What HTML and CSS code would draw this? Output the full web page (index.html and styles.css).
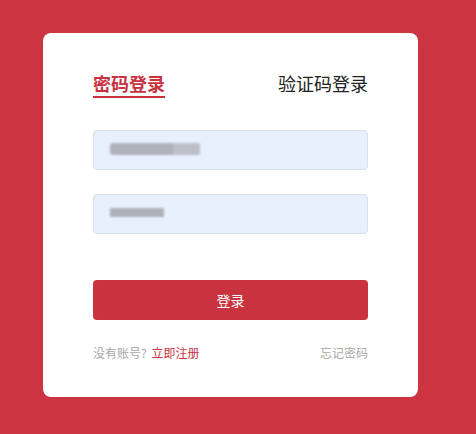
FILE: index.html
```html
<!DOCTYPE html>
<html>
<head>
<title>登录</title>
<link rel="stylesheet" href="styles.css">
</head>
<body>

<div class="login-card">
    <!-- Login type tabs -->
    <div class="tabs">
        <span class="tab active">密码登录</span>
        <span class="tab">验证码登录</span>
    </div>

    <div class="field">
        <span class="blurred blur-account"></span>
    </div>

    <div class="field field-pwd">
        <span class="blurred blur-pwd"></span>
    </div>

    <button class="login-btn">登录</button>

    <div class="footer">
        <span>没有账号? <a href="#" class="register">立即注册</a></span>
        <a href="#" class="forgot">忘记密码</a>
    </div>
</div>

</body>
</html>
```

FILE: styles.css
```css
:root {
  --brand-red: #cc3441;
  --field-bg: #e8f0fe;
  --field-border: #dcdfe6;
  --muted: #a8a8a8;
}

body {
    margin: 0;
    background-color: var(--brand-red);
    font-family: 'Noto Sans CJK SC', 'Noto Sans', sans-serif;
    height: 434px;
    overflow: hidden;
}

.login-card {
    margin: 33px 0 0 43px;
    width: 375px;
    height: 364px;
    box-sizing: border-box;
    padding: 39px 50px 0;
    background: white;
    border-radius: 8px;
}

.tabs {
    display: flex;
    justify-content: space-between;
    align-items: flex-start;
}

.tab {
    font-size: 18px;
    line-height: 22px;
    padding-bottom: 2px;
    color: #222;
    border-bottom: 2px solid transparent;
}

.tab.active {
    color: #c8323e;
    font-weight: 700;
    border-bottom-color: #c8323e;
}

.field {
    height: 40px;
    margin-top: 32px;
    box-sizing: border-box;
    padding-left: 16px;
    background: var(--field-bg);
    border: 1px solid var(--field-border);
    border-radius: 4px;
    display: flex;
    align-items: center;
}

.field-pwd {
    margin-top: 24px;
}

.blurred {
    display: block;
    background: #a7a9b2;
    filter: blur(1.2px);
    opacity: 0.9;
}

.blur-account {
    width: 90px;
    height: 12px;
    border-radius: 3px 1px 1px 3px;
    margin-top: -2px;
    background: linear-gradient(to right, #a9abb4 0 70%, #b8bac2 70% 100%);
}

.blur-pwd {
    width: 54px;
    height: 9px;
    margin-top: -3px;
}

.login-btn {
    display: block;
    width: 100%;
    height: 40px;
    margin-top: 46px;
    border: none;
    border-radius: 4px;
    background: #c9333f;
    color: white;
    font-family: inherit;
    font-size: 14px;
    cursor: pointer;
}

.footer {
    display: flex;
    justify-content: space-between;
    margin-top: 23px;
    font-size: 12px;
    line-height: 20px;
    color: var(--muted);
}

.footer a {
    text-decoration: none;
}

.register {
    color: #c8323e;
    margin-left: 2px;
}

.forgot {
    color: var(--muted);
}
```
